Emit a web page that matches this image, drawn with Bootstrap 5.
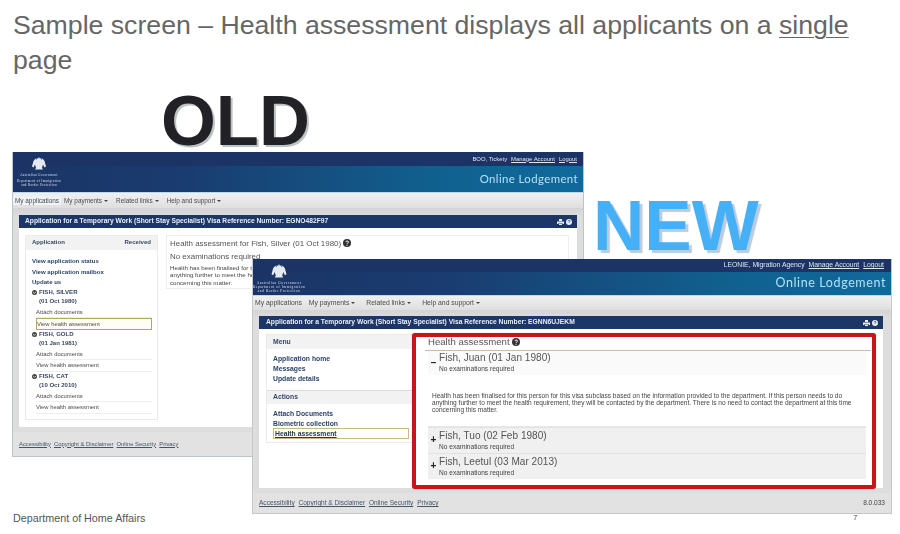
<!DOCTYPE html>
<html lang="en">
<head>
<meta charset="utf-8">
<title>Sample screen</title>
<link href="https://cdn.jsdelivr.net/npm/bootstrap@5.3.0/dist/css/bootstrap.min.css" rel="stylesheet">
<style>
html,body{margin:0;background:#fff;}
body{width:900px;height:534px;overflow:hidden;font-family:"Liberation Sans",Arial,sans-serif;position:relative;}
.slide-title{margin:0;padding:8px 40px 0 13px;width:900px;font-size:26.66px;line-height:35px;color:#666;font-weight:400;}
.slide-title u{text-underline-offset:3px;text-decoration-thickness:1px;}
.slide-foot{position:absolute;left:13px;top:511px;font-size:10.75px;color:#555;line-height:14px;}
.slide-num{position:absolute;left:853px;top:514px;font-size:8px;color:#555;line-height:8px;}
.big-old,.big-new{position:absolute;font-weight:700;}
.big-old{left:161px;top:91px;font-size:70.5px;line-height:60px;color:#222226;text-shadow:2px 2px 0 #bcc3c4;}
.big-new{left:593px;top:196px;font-size:71px;line-height:60px;color:#45b0f6;text-shadow:3px 3px 1px #b9cbdd;}
.sys-win{position:absolute;display:flex;flex-direction:column;background:#d9d9d9;filter:blur(.4px);color:#444;}
.win-old{left:12px;top:152px;width:572px;height:305px;border:1px solid #bcc4ca;border-top:0;}
.win-new{left:252px;top:259px;width:640px;height:255px;border:1px solid #c2c8cc;border-top:0;}
.strip{background:#1b3465;color:#dfe6f0;display:flex;justify-content:flex-end;align-items:center;gap:4px;}
.strip a{color:#dfe6f0;text-decoration:underline;}
.win-old .strip{height:14px;font-size:5.9px;padding-right:6px;}
.win-new .strip{height:13px;font-size:6.8px;padding-right:7px;}
.banner{position:relative;background:linear-gradient(90deg,#1b3465 0%,#1a3c70 30%,#10618f 75%,#0f6a9b 100%);color:#b4e0f6;display:flex;justify-content:flex-end;align-items:center;font-family:"Lato","Liberation Sans",sans-serif;border-bottom:1px solid #b9d9ec;}
.win-old .banner{height:27px;font-size:11.4px;padding-right:5px;letter-spacing:.4px;}
.win-new .banner{height:24px;font-size:12.5px;padding-right:5px;letter-spacing:.6px;}
.crest{position:absolute;display:flex;flex-direction:column;align-items:center;color:#dbe3ee;font-family:"Liberation Serif",serif;text-align:center;white-space:nowrap;}
.crest svg{display:block;}
.win-old .crest{left:7px;top:-10px;width:38px;font-size:3.1px;line-height:4px;}
.win-new .crest{left:3px;top:-9px;width:46px;font-size:3.4px;line-height:4.2px;}
.crest-gap{height:2px;}
.menu-bar{display:flex;align-items:center;background:linear-gradient(180deg,#f0f0f0,#dfdfdf);color:#4a4a4a;}
.win-old .menu-bar{height:15px;font-size:6.4px;}
.win-new .menu-bar{height:14px;font-size:6.8px;}
.menu-bar span{white-space:nowrap;}
.menu-active{background:#eef3f7;}
.win-old .menu-bar span{margin-right:4px;padding:0 2px;}
.win-old .menu-bar span:first-child{margin-right:1px;}
.win-new .menu-bar span{margin-right:7px;padding:0 2px;}
.win-new .menu-bar span:first-child{margin-right:3px;}
.caret-mini{display:inline-block;margin-left:2px;vertical-align:1px;border:2px solid transparent;border-top-color:#444;border-bottom:0;}
.win-body{flex:1 1 auto;min-height:0;display:flex;flex-direction:column;background:linear-gradient(180deg,#d4d4d4,#ddd 8px);}
.win-old .win-body{padding:7px 6px 5px 6px;}
.win-new .win-body{padding:6px 8px 5px 6px;}
.title-bar{background:#1c3668;color:#e8edf5;font-weight:700;display:flex;justify-content:space-between;align-items:center;white-space:nowrap;flex:none;}
.win-old .title-bar{height:13px;font-size:6.7px;padding:0 5px 0 6px;}
.win-new .title-bar{height:13px;font-size:6.72px;padding:0 5px 0 7px;}
.title-tools{display:flex;gap:2px;align-items:center;}
.pane{flex:1 1 auto;min-height:0;background:#fff;display:flex;}
.win-old .pane{padding:7px 8px 7px 6px;gap:8px;}
.win-new .pane{padding:4px 7px 0 7px;}
.side{flex:none;border:1px solid #eaeaea;}
.win-old .side{width:133px;font-size:6.05px;}
.win-new .side{width:146px;height:109px;margin-top:1px;border-right:0;font-size:6.8px;}
.side-head{display:flex;justify-content:space-between;background:#f2f2f2;font-weight:700;color:#384a66;align-items:center;}
.win-old .side-head{height:14px;padding:0 6px;margin-bottom:6px;}
.win-new .side-head{height:14px;padding:0 6px;margin-bottom:5px;}
.side-strong{display:block;font-weight:700;color:#2b4468;text-decoration:none;}
.win-old .side-strong{height:10.5px;line-height:10.5px;padding-left:6px;}
.win-new .side-strong{height:10px;line-height:10px;padding-left:6px;}
.person{display:flex;align-items:center;gap:2px;font-weight:700;color:#3a4a5e;height:9px;line-height:9px;padding-left:6px;}
.person-dob{font-weight:700;color:#3a4a5e;height:10.5px;line-height:9px;padding-left:13px;}
.side-sub{display:block;height:11.25px;line-height:10px;margin:0 5px 0 10px;padding-left:0;color:#4a4a4a;text-decoration:none;border-bottom:1px solid #eee;font-size:5.85px;}
.side-sel{border:1px solid #b5a468;background:#fffef6;}
.act-head{border-top:1px solid #ddd;margin-top:6px;}
.win-new .side-box{display:block;margin:-1px 3px 0 6px;height:11px;line-height:9px;font-weight:700;color:#26364f;padding-left:1px;border:1px solid #c9b78a;background:#fffef4;}
.old-main{flex:1 1 auto;height:54px;border:1px solid #eee;padding:1px 3px;overflow:hidden;color:#444;}
.old-main h5{font-size:7.95px;line-height:13px;margin:0;font-weight:400;color:#555;}
.old-main p{font-size:6.2px;line-height:7.3px;margin:1px 0 0;white-space:nowrap;color:#444;}
.red-box{flex:1 1 auto;border:4px solid #c8141b;border-radius:3px;background:#fff;margin-bottom:-1px;padding:0 0 0 8px;box-shadow:0 0 1px #e78a8a;}
.new-head{font-size:9.6px;line-height:10px;color:#555;padding:0 0 0 4px;height:13px;}
.new-rule{border-top:1px solid #cfb9a6;margin:0 1px 0 1px;}
.acc-row{display:flex;margin:0 6px 0 4px;background:#fafafa;}
.acc-row.shut{background:#f0f0f0;border-top:1px solid #e2e2e2;height:26px;}
.acc-sign{flex:none;width:11px;font-weight:700;font-size:10px;line-height:24px;color:#222;text-align:center;}
.shut .acc-sign{line-height:24px;}
.acc-name{font-size:10.05px;line-height:13px;color:#555;letter-spacing:.02px;}
.shut .acc-name{padding-top:1px;}
.acc-note{font-size:6.6px;line-height:9px;color:#444;}
.acc-body{margin:0 6px 0 4px;height:52px;padding:17px 0 0 4px;font-size:6.55px;line-height:7px;color:#444;border-bottom:1px solid #e8e8e8;}
.foot-row{display:flex;justify-content:space-between;align-items:center;background:#e2e2e2;flex:none;}
.foot-row a{color:#456;text-decoration:underline;}
.win-old .foot-row{height:24px;font-size:5.85px;padding:0 6px;}
.win-old .foot-row a{margin-right:1.5px;}
.win-new .foot-row{height:20px;font-size:6.55px;padding:0 6px;}
.win-new .foot-row a{margin-right:2px;}
.ico{display:inline-block;flex:none;vertical-align:-1px;}
</style>
</head>
<body>
<h1 class="slide-title">Sample screen – Health assessment displays all applicants on a <u>single</u> page</h1>
<div class="big-old">OLD</div>

<section class="sys-win win-old">
  <div class="strip"><span>BOO, Tickety</span><a href="#">Manage Account</a><a href="#">Logout</a></div>
  <div class="banner">
    <div class="crest"><svg width="20" height="15" viewBox="0 0 20 15"><path fill="#e4eaf2" d="M10 1l.8 1.600 1.700-.3-.5 1.900 1.500-1.700 2 2.500 1.500 5.500-1.500 1-1.500-3-1 3.500 1 1.500H6l1-1.500-1-3.500-1.500 3-1.500-1L4.500 5l2-2.500 1.500 1.700-.5-1.900 1.700.3z"/></svg><div class="crest-gap"></div><div>Australian Government</div><div class="crest-gap"></div><div>Department of Immigration<br>and Border Protection</div></div>
    <span>Online Lodgement</span>
  </div>
  <nav class="menu-bar"><span class="menu-active">My applications</span><span>My payments<i class="caret-mini"></i></span><span>Related links<i class="caret-mini"></i></span><span>Help and support<i class="caret-mini"></i></span></nav>
  <div class="win-body">
    <div class="title-bar"><span>Application for a Temporary Work (Short Stay Specialist) Visa Reference Number: EGNO482F97</span>
      <span class="title-tools"><svg class="ico" width="7" height="6" viewBox="0 0 7 6"><path fill="#e8edf5" d="M2 0h3v2H2zM0 2.500h7V5H5.500V4h-4v1H0z"/><path fill="#e8edf5" d="M2 4.500h3V6H2z"/></svg><svg class="ico" width="6" height="6" viewBox="0 0 6 6"><circle cx="3" cy="3" r="3" fill="#e8edf5"/><path d="M2 2.200c.3-1 2-1 2 0 0 .7-1 .7-1 1.400" fill="none" stroke="#1c3668" stroke-width=".8"/></svg></span></div>
    <div class="pane">
      <aside class="side">
        <div class="side-head"><span>Application</span><span>Received</span></div>
        <a class="side-strong" href="#">View application status</a>
        <a class="side-strong" href="#">View application mailbox</a>
        <a class="side-strong" href="#">Update us</a>
        <div class="person"><svg class="ico" width="5" height="5" viewBox="0 0 5 5"><circle cx="2.500" cy="2.500" r="2.500" fill="#444"/><path d="M1.200 2l1.300 1.300L3.800 2" fill="none" stroke="#fff" stroke-width=".8"/></svg>FISH, SILVER</div>
        <div class="person-dob">(01 Oct 1980)</div>
        <a class="side-sub" href="#">Attach documents</a>
        <a class="side-sub side-sel" href="#">View health assessment</a>
        <div class="person"><svg class="ico" width="5" height="5" viewBox="0 0 5 5"><circle cx="2.500" cy="2.500" r="2.500" fill="#444"/><path d="M1.200 2l1.300 1.300L3.800 2" fill="none" stroke="#fff" stroke-width=".8"/></svg>FISH, GOLD</div>
        <div class="person-dob">(01 Jan 1981)</div>
        <a class="side-sub" href="#">Attach documents</a>
        <a class="side-sub" href="#">View health assessment</a>
        <div class="person"><svg class="ico" width="5" height="5" viewBox="0 0 5 5"><circle cx="2.500" cy="2.500" r="2.500" fill="#444"/><path d="M1.200 2l1.300 1.300L3.800 2" fill="none" stroke="#fff" stroke-width=".8"/></svg>FISH, CAT</div>
        <div class="person-dob">(10 Oct 2010)</div>
        <a class="side-sub" href="#">Attach documents</a>
        <a class="side-sub" href="#">View health assessment</a>
      </aside>
      <div class="old-main">
        <h5>Health assessment for Fish, Silver (01 Oct 1980) <svg class="ico" width="8" height="8" viewBox="0 0 8 8"><circle cx="4" cy="4" r="4" fill="#333"/><path d="M2.700 3c.3-1.300 2.800-1.300 2.800 0 0 1-1.500 1-1.500 2M4 5.800v1" fill="none" stroke="#fff" stroke-width="1"/></svg></h5>
        <h5>No examinations required</h5>
        <p>Health has been finalised for this person for this visa subclass based on the information<br>anything further to meet the health requirement, they will be contacted by the department.<br>concerning this matter.</p>
      </div>
    </div>
  </div>
  <footer class="foot-row"><span><a href="#">Accessibility</a> <a href="#">Copyright &amp; Disclaimer</a> <a href="#">Online Security</a> <a href="#">Privacy</a></span></footer>
</section>

<div class="big-new">NEW</div>
<div class="slide-num">7</div>

<section class="sys-win win-new">
  <div class="strip"><span>LEONIE, Migration Agency</span><a href="#">Manage Account</a><a href="#">Logout</a></div>
  <div class="banner">
    <div class="crest"><svg width="22" height="16" viewBox="0 0 20 15"><path fill="#e4eaf2" d="M10 1l.8 1.600 1.700-.3-.5 1.900 1.500-1.700 2 2.500 1.500 5.500-1.500 1-1.500-3-1 3.500 1 1.500H6l1-1.500-1-3.500-1.500 3-1.500-1L4.500 5l2-2.500 1.500 1.700-.5-1.900 1.700.3z"/></svg><div class="crest-gap"></div><div>Australian Government</div><div>Department of Immigration<br>and Border Protection</div></div>
    <span>Online Lodgement</span>
  </div>
  <nav class="menu-bar"><span>My applications</span><span>My payments<i class="caret-mini"></i></span><span>Related links<i class="caret-mini"></i></span><span>Help and support<i class="caret-mini"></i></span></nav>
  <div class="win-body">
    <div class="title-bar"><span>Application for a Temporary Work (Short Stay Specialist) Visa Reference Number: EGNN6UJEKM</span>
      <span class="title-tools"><svg class="ico" width="7" height="6" viewBox="0 0 7 6"><path fill="#e8edf5" d="M2 0h3v2H2zM0 2.500h7V5H5.500V4h-4v1H0z"/><path fill="#e8edf5" d="M2 4.500h3V6H2z"/></svg><svg class="ico" width="6" height="6" viewBox="0 0 6 6"><circle cx="3" cy="3" r="3" fill="#e8edf5"/><path d="M2 2.200c.3-1 2-1 2 0 0 .7-1 .7-1 1.400" fill="none" stroke="#1c3668" stroke-width=".8"/></svg></span></div>
    <div class="pane">
      <aside class="side">
        <div class="side-head"><span>Menu</span></div>
        <a class="side-strong" href="#">Application home</a>
        <a class="side-strong" href="#">Messages</a>
        <a class="side-strong" href="#">Update details</a>
        <div class="side-head act-head"><span>Actions</span></div>
        <a class="side-strong" href="#">Attach Documents</a>
        <a class="side-strong" href="#">Biometric collection</a>
        <a class="side-box" href="#">Health assessment</a>
      </aside>
      <div class="red-box">
        <div class="new-head">Health assessment <svg class="ico" width="8" height="8" viewBox="0 0 8 8"><circle cx="4" cy="4" r="4" fill="#333"/><path d="M2.700 3c.3-1.300 2.800-1.300 2.800 0 0 1-1.500 1-1.500 2M4 5.800v1" fill="none" stroke="#fff" stroke-width="1"/></svg></div>
        <div class="new-rule"></div>
        <div class="acc-row"><div class="acc-sign">–</div><div><div class="acc-name">Fish, Juan (01 Jan 1980)</div><div class="acc-note">No examinations required</div></div></div>
        <div class="acc-body">Health has been finalised for this person for this visa subclass based on the information provided to the department. If this person needs to do anything further to meet the health requirement, they will be contacted by the department. There is no need to contact the department at this time concerning this matter.</div>
        <div class="acc-row shut"><div class="acc-sign">+</div><div><div class="acc-name">Fish, Tuo (02 Feb 1980)</div><div class="acc-note">No examinations required</div></div></div>
        <div class="acc-row shut"><div class="acc-sign">+</div><div><div class="acc-name">Fish, Leetul (03 Mar 2013)</div><div class="acc-note">No examinations required</div></div></div>
      </div>
    </div>
  </div>
  <footer class="foot-row"><span><a href="#">Accessibility</a> <a href="#">Copyright &amp; Disclaimer</a> <a href="#">Online Security</a> <a href="#">Privacy</a></span><span>8.0.033</span></footer>
</section>

<div class="slide-foot">Department of Home Affairs</div>
</body>
</html>
